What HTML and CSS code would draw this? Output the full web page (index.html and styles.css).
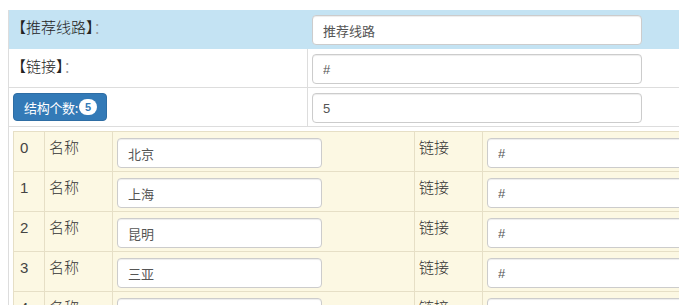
FILE: index.html
```html
<!DOCTYPE html>
<html lang="zh-CN">
<head>
<meta charset="utf-8">
<link rel="stylesheet" href="styles.css">
</head>
<body>
<div class="outer">
  <div class="orow info">
    <div class="olabel">【推荐线路】<span class="colon">：</span></div>
    <div class="ofield"><input class="ctl" value="推荐线路"></div>
  </div>
  <div class="orow">
    <div class="olabel">【链接】<span class="colon">：</span></div>
    <div class="ofield"><input class="ctl" value="#"></div>
  </div>
  <div class="orow">
    <div class="obtn"><span class="btn">结构个数:<span class="badge">5</span></span></div>
    <div class="ofield"><input class="ctl" value="5"></div>
  </div>
  <div class="inner-wrap">
    <div class="inner">
      <div class="irow"><div class="c num">0</div><div class="c lab">名称</div><div class="c fld"><input class="ctl small" value="北京"></div><div class="c lab">链接</div><div class="c fld"><input class="ctl wide" value="#"></div></div>
      <div class="irow"><div class="c num">1</div><div class="c lab">名称</div><div class="c fld"><input class="ctl small" value="上海"></div><div class="c lab">链接</div><div class="c fld"><input class="ctl wide" value="#"></div></div>
      <div class="irow"><div class="c num">2</div><div class="c lab">名称</div><div class="c fld"><input class="ctl small" value="昆明"></div><div class="c lab">链接</div><div class="c fld"><input class="ctl wide" value="#"></div></div>
      <div class="irow"><div class="c num">3</div><div class="c lab">名称</div><div class="c fld"><input class="ctl small" value="三亚"></div><div class="c lab">链接</div><div class="c fld"><input class="ctl wide" value="#"></div></div>
      <div class="irow"><div class="c num">4</div><div class="c lab">名称</div><div class="c fld"><input class="ctl small" value="丽江"></div><div class="c lab">链接</div><div class="c fld"><input class="ctl wide" value="#"></div></div>
    </div>
  </div>
</div>
</body>
</html>
```
FILE: styles.css
```css
html, body {
  margin: 0;
  padding: 0;
  background: #fff;
  overflow: hidden;
}
body {
  padding: 10px 0 0 8px;
  font-family: "Liberation Sans", "Noto Sans CJK SC", sans-serif;
  font-size: 14px;
  color: #333;
}
.outer {
  width: 900px;
  border-left: 1px solid #ddd;
  min-height: 400px;
}
.orow {
  display: grid;
  grid-template-columns: 299px 1fr;
  height: 38px;
  border-bottom: 1px solid #ddd;
}
.orow.info {
  background: #c4e3f3;
  border-bottom-color: #c4e3f3;
}
.olabel {
  padding: 7px 2px;
  line-height: 20px;
  font-family: "Noto Sans CJK SC", sans-serif;
  font-size: 15px;
  font-weight: 300;
  color: #222;
  border-right: 1px solid #ddd;
  white-space: nowrap;
}
.colon { color: #999; }
.orow.info .olabel { border-right-color: #c4e3f3; }
.obtn {
  padding: 5px 4px;
  border-right: 1px solid #ddd;
}
.ofield {
  padding: 5px 4px 3px;
}
.ctl {
  box-sizing: border-box;
  width: 330px;
  height: 30px;
  border: 1px solid #ccc;
  border-radius: 4px;
  background: #fff;
  padding: 0 10px;
  font-family: "Liberation Sans", "Noto Sans CJK SC", sans-serif;
  font-size: 13px;
  color: #555;
  box-shadow: inset 0 1px 1px rgba(0,0,0,.075);
  outline: none;
  margin: 0;
}
.btn {
  display: inline-flex;
  align-items: center;
  box-sizing: border-box;
  height: 28px;
  width: 94px;
  padding: 0 0 0 10px;
  background: #337ab7;
  border: 1px solid #2e6da4;
  border-radius: 4px;
  color: #fff;
  font-size: 13px;
  font-family: "Noto Sans CJK SC", sans-serif;
  white-space: nowrap;
  letter-spacing: -0.3px;
}
.badge {
  display: inline-block;
  margin-left: 1px;
  min-width: 18px;
  height: 16px;
  line-height: 16px;
  border-radius: 8px;
  background: #fff;
  color: #337ab7;
  font-family: "Liberation Sans", sans-serif;
  font-weight: bold;
  font-size: 11px;
  text-align: center;
  letter-spacing: 0;
}
.inner-wrap {
  padding: 4px 4px;
}
.inner {
  width: 900px;
  border-left: 1px solid #e6dfc6;
  border-top: 1px solid #e6dfc6;
}
.irow {
  display: grid;
  grid-template-columns: 31px 68px 302px 68px 1fr;
  height: 39px;
  border-bottom: 1px solid #e6dfc6;
  background: #fcf8e3;
}
.c {
  border-right: 1px solid #e6dfc6;
  padding: 6px 4px 0;
  line-height: 20px;
}
.num { padding: 6px 6px 0; font-size: 15px; color: #444; }
.lab { padding: 6px 4px 0; font-size: 15px; font-weight: 300; font-family: "Noto Sans CJK SC", sans-serif; line-height: 18px; color: #333; }
.fld { padding: 6px 4px 0; }
.ctl.small { width: 205px; }
.ctl.wide { width: 400px; }
```
